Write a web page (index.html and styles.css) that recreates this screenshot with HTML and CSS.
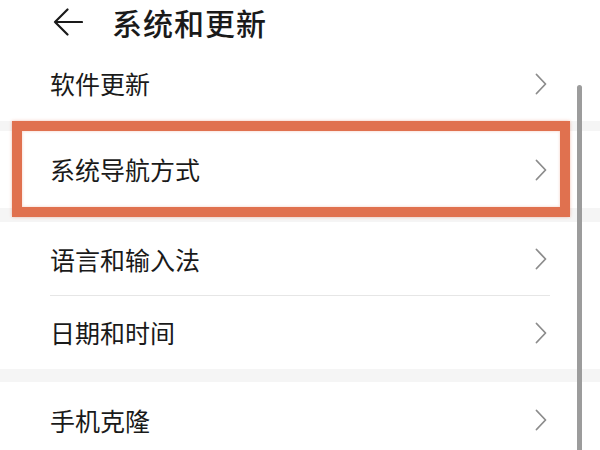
FILE: index.html
```html
<!DOCTYPE html>
<html lang="zh-CN">
<head>
<meta charset="utf-8">
<title>系统和更新</title>
<link rel="stylesheet" href="styles.css">
</head>
<body>
<div class="screen">
  <header class="header">
    <svg class="back" width="30" height="28" viewBox="0 0 30 28"><path d="M14.5 1.5 L2 14 L14.5 26.5 M2 14 H29" fill="none" stroke="#1a1a1a" stroke-width="2.2" stroke-linecap="round" stroke-linejoin="round"/></svg>
    <h1 class="title">系统和更新</h1>
  </header>
  <div class="list">
    <div class="row r1"><span class="label">软件更新</span><svg class="chev" width="12" height="22" viewBox="0 0 12 22"><path d="M1.5 1.5 L10.5 11 L1.5 20.5" fill="none" stroke="#8c8c8c" stroke-width="1.8" stroke-linecap="round" stroke-linejoin="round"/></svg></div>
    <div class="band b1"></div>
    <div class="row r2"><span class="label">系统导航方式</span><svg class="chev" width="12" height="22" viewBox="0 0 12 22"><path d="M1.5 1.5 L10.5 11 L1.5 20.5" fill="none" stroke="#8c8c8c" stroke-width="1.8" stroke-linecap="round" stroke-linejoin="round"/></svg></div>
    <div class="band b2"></div>
    <div class="row r3 divided"><span class="label">语言和输入法</span><svg class="chev" width="12" height="22" viewBox="0 0 12 22"><path d="M1.5 1.5 L10.5 11 L1.5 20.5" fill="none" stroke="#8c8c8c" stroke-width="1.8" stroke-linecap="round" stroke-linejoin="round"/></svg></div>
    <div class="row r4"><span class="label">日期和时间</span><svg class="chev" width="12" height="22" viewBox="0 0 12 22"><path d="M1.5 1.5 L10.5 11 L1.5 20.5" fill="none" stroke="#8c8c8c" stroke-width="1.8" stroke-linecap="round" stroke-linejoin="round"/></svg></div>
    <div class="band b3"></div>
    <div class="row r5"><span class="label">手机克隆</span><svg class="chev" width="12" height="22" viewBox="0 0 12 22"><path d="M1.5 1.5 L10.5 11 L1.5 20.5" fill="none" stroke="#8c8c8c" stroke-width="1.8" stroke-linecap="round" stroke-linejoin="round"/></svg></div>
    <div class="highlight"></div>
  </div>
  <div class="scrollbar"></div>
</div>
</body>
</html>
```
FILE: styles.css
```css
html, body { margin: 0; padding: 0; background: #ffffff; }
body { font-family: "Noto Sans CJK SC", "Noto Sans", sans-serif; color: #1a1a1a; }
.screen { position: relative; width: 600px; height: 450px; overflow: hidden; }
.header { height: 46px; display: flex; align-items: center; padding-left: 53px; gap: 29px; box-sizing: border-box; }
.back { display: block; margin-top: -2px; }
.title { margin: 0; font-size: 30px; font-weight: 500; letter-spacing: 1px; line-height: 1; margin-top: -3px; }
.list { position: relative; }
.row { display: flex; align-items: center; justify-content: space-between; padding: 0 50px 0 50px; box-sizing: border-box; }
.label { font-size: 25px; line-height: 1; letter-spacing: 0; }
.chev { display: block; margin-right: 3px; }
.r1 { height: 75px; }
.r2 { height: 77px; }
.r3 { height: 74px; }
.r4 { height: 73px; }
.r5 { height: 76px; }
.divided { position: relative; }
.divided::after { content: ""; position: absolute; left: 50px; right: 50px; bottom: 0; height: 1px; background: #e6e6e6; }
.band { background: #f5f5f5; }
.b1 { height: 10px; }
.b2 { height: 14px; }
.b3 { height: 13px; }
.highlight { position: absolute; left: 12px; top: 75px; width: 558px; height: 96px; box-sizing: border-box; border: 10px solid #e0714f; box-shadow: 0 0 3px rgba(224,113,79,0.45), inset 0 0 3px rgba(224,113,79,0.35); }
.scrollbar { position: absolute; left: 577px; top: 85px; width: 5px; height: 380px; background: #9c9c9c; border-radius: 3px; }
```
